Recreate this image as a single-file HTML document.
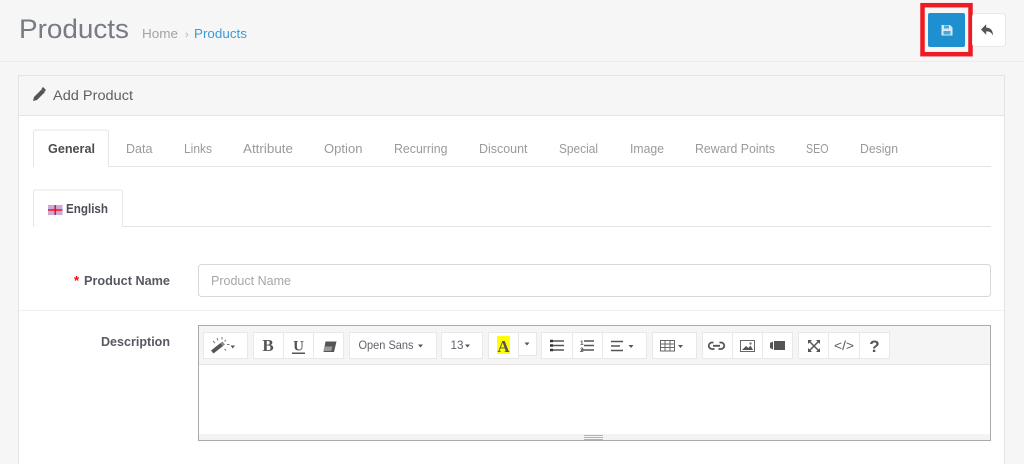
<!DOCTYPE html>
<html><head><meta charset="utf-8"><style>
html,body{margin:0;padding:0;width:1024px;height:464px;overflow:hidden;background:#f6f6f6}
svg{display:block;font-family:"Liberation Sans",sans-serif;filter:blur(.35px)}
.tab{font-size:12.500px;fill:#9a9a9a}
.b{fill:#fff;stroke:#e8e8e8;stroke-width:1}
.i{fill:#555}
</style></head><body>
<svg width="1024" height="464" viewBox="0 0 1024 464" xmlns="http://www.w3.org/2000/svg">
<rect width="1024" height="464" fill="#f6f6f6"/>
<rect x="0" y="61" width="1024" height="1" fill="#ececec"/>
<text x="19" y="38" font-size="27" fill="#767b84" textLength="110" lengthAdjust="spacingAndGlyphs">Products</text>
<text x="142" y="38" font-size="13" fill="#a3a3a3" textLength="36" lengthAdjust="spacingAndGlyphs">Home</text>
<text x="185" y="38" font-size="11" fill="#b5b5b5">›</text>
<text x="194" y="38" font-size="13" fill="#3b9bd9" textLength="53" lengthAdjust="spacingAndGlyphs">Products</text>

<!-- buttons -->
<rect x="922.500" y="5.200" width="48" height="49" fill="#f6f6f6" stroke="#ed1c24" stroke-width="4.500"/>
<rect x="928" y="13" width="37" height="34" rx="2" fill="#1f90cf"/>
<path d="M941.500 25h8.500l2.500 2.500v8h-11z" fill="#d5e8f4"/>
<rect x="944" y="25.500" width="5" height="3" fill="#4ba6da"/>
<rect x="943.500" y="31" width="7" height="3.500" fill="#4ba6da"/>
<rect x="972.500" y="13.500" width="33" height="33" rx="3" fill="#fff" stroke="#e8e8e8"/>
<path d="M981 29.500l5.200-5.200v3.300c4.300 0 6.800 2.700 6.800 8-1.500-3.100-3.300-4.200-6.800-4.200v3.300z" fill="#555"/>

<!-- panel -->
<rect x="18.500" y="75.500" width="986" height="400" fill="#fff" stroke="#e4e4e4"/>
<rect x="19" y="76" width="985" height="39" fill="#f6f6f6"/>
<rect x="19" y="115" width="985" height="1" fill="#e4e4e4"/>
<path d="M33 101l1-4 8-8 3 3-8 8z" fill="#555"/><path d="M41.500 88.500l1.500-1.500 3 3-1.500 1.500z" fill="#555"/>
<text x="53" y="100" font-size="13.500" fill="#5c5f66" textLength="80" lengthAdjust="spacingAndGlyphs">Add Product</text>

<!-- tabs -->
<rect x="33" y="166" width="958" height="1" fill="#e4e4e4"/>
<path d="M33.500 167v-35a2 2 0 0 1 2-2h71a2 2 0 0 1 2 2v35" fill="#fff" stroke="#e6e6e6"/>
<rect x="34" y="166" width="74" height="1.500" fill="#fff"/>
<text x="48" y="153" font-size="12.500" font-weight="bold" fill="#4c4c4c" textLength="47" lengthAdjust="spacingAndGlyphs">General</text>
<text class="tab" x="126" y="153" textLength="26.500" lengthAdjust="spacingAndGlyphs">Data</text>
<text class="tab" x="184" y="153" textLength="28" lengthAdjust="spacingAndGlyphs">Links</text>
<text class="tab" x="243" y="153" textLength="50" lengthAdjust="spacingAndGlyphs">Attribute</text>
<text class="tab" x="324" y="153" textLength="38.500" lengthAdjust="spacingAndGlyphs">Option</text>
<text class="tab" x="394" y="153" textLength="53.500" lengthAdjust="spacingAndGlyphs">Recurring</text>
<text class="tab" x="479" y="153" textLength="48.500" lengthAdjust="spacingAndGlyphs">Discount</text>
<text class="tab" x="559" y="153" textLength="39" lengthAdjust="spacingAndGlyphs">Special</text>
<text class="tab" x="630" y="153" textLength="34" lengthAdjust="spacingAndGlyphs">Image</text>
<text class="tab" x="695" y="153" textLength="80" lengthAdjust="spacingAndGlyphs">Reward Points</text>
<text class="tab" x="806" y="153" textLength="22.500" lengthAdjust="spacingAndGlyphs">SEO</text>
<text class="tab" x="860" y="153" textLength="38" lengthAdjust="spacingAndGlyphs">Design</text>

<!-- language tab -->
<rect x="33" y="226" width="958" height="1" fill="#e4e4e4"/>
<path d="M33.500 227v-35a2 2 0 0 1 2-2h85a2 2 0 0 1 2 2v35" fill="#fff" stroke="#e6e6e6"/>
<rect x="34" y="226" width="88" height="1.500" fill="#fff"/>
<rect x="48" y="205" width="14.500" height="10" fill="#b9b4e4"/>
<path d="M48 205l14.500 10M62.500 205l-14.500 10" stroke="#ef9aa8" stroke-width="1"/>
<path d="M55.250 205v10M48 210h14.500" stroke="#f01030" stroke-width="1.600"/>
<text x="66" y="213" font-size="12.500" font-weight="bold" fill="#4c4f55" textLength="42" lengthAdjust="spacingAndGlyphs">English</text>

<!-- form -->
<text x="74" y="285" font-size="13" font-weight="bold" fill="#f00">*</text>
<text x="84" y="285" font-size="12.500" font-weight="bold" fill="#565962" textLength="86" lengthAdjust="spacingAndGlyphs">Product Name</text>
<rect x="198.500" y="264.500" width="792" height="32" rx="3" fill="#fff" stroke="#d8d8d8"/>
<text x="211" y="285" font-size="12.500" fill="#a6a6a6" textLength="80" lengthAdjust="spacingAndGlyphs">Product Name</text>
<rect x="19" y="310" width="985" height="1" fill="#f1f1f1"/>
<text x="101" y="346" font-size="12.500" font-weight="bold" fill="#565962" textLength="69" lengthAdjust="spacingAndGlyphs">Description</text>

<!-- editor -->
<rect x="198" y="325" width="793" height="116" fill="#aaa"/>
<rect x="199" y="326" width="791" height="38" fill="#f5f5f5"/>
<rect x="199" y="364" width="791" height="1" fill="#e4e4e4"/>
<rect x="199" y="365" width="791" height="69" fill="#fff"/>
<rect x="199" y="434" width="791" height="6" fill="#f3f3f3"/>
<rect x="584" y="435" width="19" height="1" fill="#b5b5b5"/><rect x="584" y="437" width="19" height="1" fill="#b5b5b5"/><rect x="584" y="439" width="19" height="1" fill="#b5b5b5"/>

<!-- toolbar buttons -->
<rect class="b" x="203.500" y="332.500" width="44" height="26"/>
<rect class="b" x="253.500" y="332.500" width="30" height="26"/>
<rect class="b" x="283.500" y="332.500" width="30" height="26"/>
<rect class="b" x="313.500" y="332.500" width="30" height="26"/>
<rect class="b" x="349.500" y="332.500" width="87" height="26"/>
<rect class="b" x="441.500" y="332.500" width="41" height="26"/>
<rect class="b" x="488.500" y="332.500" width="30" height="26"/>
<rect class="b" x="518.500" y="332.500" width="18" height="23"/>
<rect class="b" x="541.500" y="332.500" width="31" height="26"/>
<rect class="b" x="572.500" y="332.500" width="30" height="26"/>
<rect class="b" x="602.500" y="332.500" width="44" height="26"/>
<rect class="b" x="652.500" y="332.500" width="44" height="26"/>
<rect class="b" x="702.500" y="332.500" width="30" height="26"/>
<rect class="b" x="732.500" y="332.500" width="30" height="26"/>
<rect class="b" x="762.500" y="332.500" width="30" height="26"/>
<rect class="b" x="798.500" y="332.500" width="30" height="26"/>
<rect class="b" x="828.500" y="332.500" width="31" height="26"/>
<rect class="b" x="859.500" y="332.500" width="30" height="26"/>

<!-- magic -->
<path d="M211 350.500l9.500-7.500 2.500 3-9.500 7.500z" fill="#555"/>
<path d="M220.500 343l2-1.500 2.500 3-2 1.500z" fill="#8a8a8a"/>
<path d="M217 338l1 2.500M222 337v2.500M227 344.500h2.500M213 341l2 2M226 340l-1.500 1.500M224.500 349l1.500 1.500" stroke="#777" stroke-width="1"/>
<path d="M230.500 345.500h4.500l-2.250 3z" class="i"/>
<!-- B U eraser -->
<text x="268" y="351" font-family="Liberation Serif" font-size="17" font-weight="bold" fill="#555" text-anchor="middle">B</text>
<text x="298.500" y="350.500" font-family="Liberation Serif" font-size="15" font-weight="bold" fill="#555" text-anchor="middle">U</text>
<rect x="292" y="352.500" width="13" height="1.500" fill="#555"/>
<path d="M325.500 341.500h11l-2.500 10.500h-10.500z" fill="#555"/>
<path d="M324.500 346.500h8l-1.200 4.500h-8z" fill="#9a9a9a"/>
<!-- font -->
<text x="358.500" y="349" font-size="12" fill="#5f6269" textLength="55" lengthAdjust="spacingAndGlyphs">Open Sans</text>
<path d="M418 344.500h5l-2.500 3z" class="i"/>
<text x="450.500" y="349" font-size="12" fill="#5f6269" textLength="13" lengthAdjust="spacingAndGlyphs">13</text>
<path d="M465 344.500h5l-2.500 3z" class="i"/>
<!-- color -->
<rect x="497" y="336" width="13" height="18" fill="#ff0"/>
<text x="503.500" y="352" font-family="Liberation Serif" font-size="17" font-weight="bold" fill="#555" text-anchor="middle">A</text>
<path d="M524.500 342.500h5l-2.500 3z" class="i"/>
<!-- ul -->
<path d="M550 341h14M550 345.500h14M550 350h14" stroke="#555" stroke-width="1.500"/>
<path d="M550 341h3M550 345.500h3M550 350h3" stroke="#333" stroke-width="2.400"/>
<!-- ol -->
<path d="M584 341h10M584 345.500h10M581 350h13" stroke="#555" stroke-width="1.500"/>
<text x="580" y="345" font-size="6.500" font-weight="bold" fill="#555">1</text>
<text x="580" y="352" font-size="6.500" font-weight="bold" fill="#555">2</text>
<!-- align -->
<path d="M611 341.500h12M611 346h9M611 350.500h12" stroke="#555" stroke-width="1.500"/>
<path d="M628.500 345h5l-2.500 3z" class="i"/>
<!-- table -->
<path d="M660.500 340.500h14v10.500h-14zM660.500 344h14M660.500 347.500h14M665 340.500v10.500M670 340.500v10.500" fill="none" stroke="#666"/>
<path d="M678 345h5l-2.500 3z" class="i"/>
<!-- link -->
<path d="M713.500 342.500h-1.500a3.200 3.200 0 0 0 0 6.500h2.500M719.500 342.500h1.500a3.200 3.200 0 0 1 0 6.500h-2.500M713 345.800h7" fill="none" stroke="#555" stroke-width="1.800"/>
<!-- image -->
<rect x="740.500" y="340.500" width="14" height="11" fill="#fff" stroke="#666"/>
<path d="M742 350l4-4 2.500 2 2-2.500 2.500 4.500z" fill="#555"/><circle cx="750.500" cy="343.500" r="1.200" fill="#777"/>
<!-- video -->
<rect x="774" y="341" width="11" height="9" fill="#555"/>
<path d="M770 343l3-1.500v8l-3-1.500z" fill="#555"/>
<!-- expand -->
<path d="M809 341l10 10M819 341l-10 10" stroke="#555" stroke-width="1.500"/>
<path d="M808 340h4l-4 4zM820 340h-4l4 4zM808 352h4l-4-4zM820 352h-4l4-4z" fill="#555"/>
<!-- code -->
<text x="844" y="350" font-size="12.500" fill="#5a5a5a" text-anchor="middle" textLength="20" lengthAdjust="spacingAndGlyphs">&lt;/&gt;</text>
<!-- help -->
<text x="874.500" y="352" font-size="17" font-weight="bold" fill="#555" text-anchor="middle">?</text>
</svg>
</body></html>
